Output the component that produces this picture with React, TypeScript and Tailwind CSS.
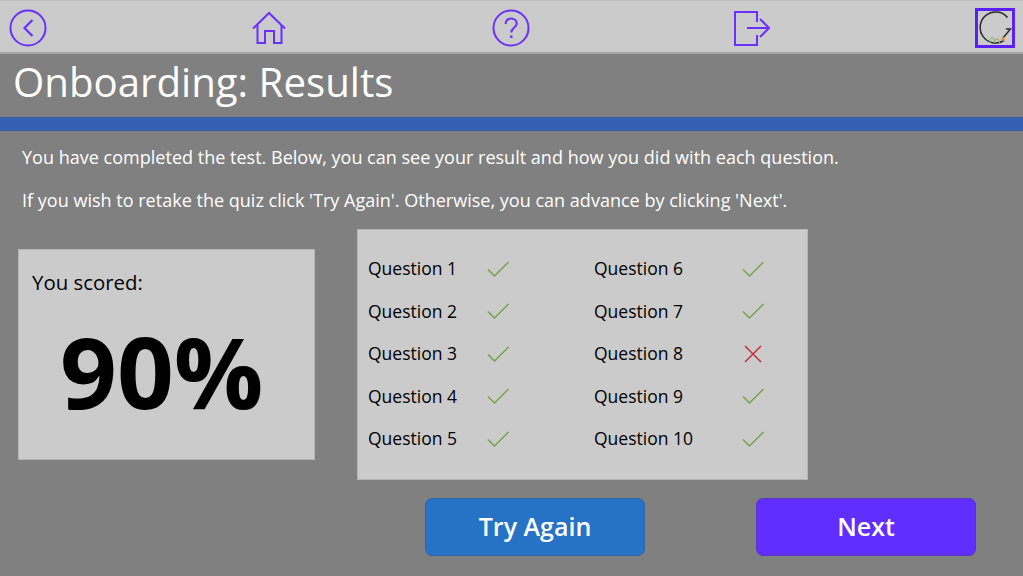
import React from "react";

const P = "#6a30ff";

function Check() {
  return (
    <svg width="24" height="18" viewBox="0 0 24 18" fill="none" stroke="#76a04e" strokeWidth="1.5">
      <path d="M2 9.5 L8.5 16 L22.5 2" />
    </svg>
  );
}
function Cross() {
  return (
    <svg width="20" height="18" viewBox="0 0 20 18" fill="none" stroke="#c22f3a" strokeWidth="1.5">
      <path d="M2 1 L18 17 M18 1 L2 17" />
    </svg>
  );
}

function Row({ label, ok, w, iw }: { label: string; ok: boolean; w: string; iw: string }) {
  return (
    <div className="flex items-center h-[42.5px]">
      <div className={`${w} text-[17.5px] text-black leading-none`}>{label}</div>
      <div className={`${iw} flex justify-center`}>{ok ? <Check /> : <Cross />}</div>
    </div>
  );
}

export default function App() {
  return (
    <div className="w-[1023px] h-[576px] overflow-hidden bg-[#808080] text-white flex flex-col font-['Open_Sans',sans-serif]">
      <header className="h-[54px] shrink-0 bg-[#cbcbcb] border-t border-t-[#bdbdbd] border-b-2 border-b-[#a6a6a6] flex items-center pt-[2px]">
        <div className="w-[55px] flex justify-center pl-[1px]">
          <svg width="38" height="38" viewBox="0 0 38 38" fill="none" stroke={P} strokeWidth="2">
            <circle cx="19" cy="19" r="17.5" />
            <path d="M23.5 11 L15.5 19 L23.5 27" strokeWidth="2.2" />
          </svg>
        </div>
        <div className="w-[186px]" />
        <div className="w-[56px] flex justify-center">
          <svg width="36" height="34" viewBox="0 0 36 34" fill="none" stroke={P} strokeWidth="2">
            <path d="M2 17.5 L18 2 L34 17.5" />
            <path d="M6.5 14 V32 H14 V20 H23 V32 H30.5 V14" />
          </svg>
        </div>
        <div className="w-[186px]" />
        <div className="w-[56px] flex justify-center">
          <svg width="38" height="38" viewBox="0 0 38 38" fill="none" stroke={P} strokeWidth="2">
            <circle cx="19" cy="19" r="17.5" />
            <path d="M13.5 15 C13.5 11.5 16 9.5 19 9.5 C22.5 9.5 24.7 11.7 24.7 14.5 C24.7 18.5 19.3 18.5 19.3 23.5" strokeWidth="2.1" />
            <path d="M19.3 26.5 V29" strokeWidth="2.4" />
          </svg>
        </div>
        <div className="w-[185px]" />
        <div className="w-[56px] flex justify-center">
          <svg width="38" height="36" viewBox="0 0 38 36" fill="none" stroke={P} strokeWidth="2">
            <path d="M24 12 V2 H2 V35 H24 V25" />
            <path d="M14 18 H36 M27 9 L36 18 L27 27" />
          </svg>
        </div>
        <div className="w-[195px]" />
        <div className="w-[40px] h-[40px] border-[3px] border-[#5a20f5] flex items-center justify-center">
          <svg width="34" height="34" viewBox="0 0 34 34" fill="none">
            <path d="M29.5 6.5 A15.5 15.5 0 1 0 26 29.5" stroke="#2b2b2b" strokeWidth="1.5" />
            <path d="M25 27 L32.5 18 H28" stroke="#2b2b2b" strokeWidth="1.5" />
            <path d="M12 32 C12 25 16 25 16.5 32 C17 27 21 26 21.5 32" stroke="#8fb878" strokeWidth="1.1" />
            <circle cx="25" cy="28" r="1.9" fill="#ee8a3a" />
          </svg>
        </div>
      </header>

      <div className="h-[63px] shrink-0 flex items-center pl-[13px] pb-[7px]">
        <h1 className="text-[40.2px] leading-none text-white font-normal">Onboarding: Results</h1>
      </div>
      <div className="h-[14px] shrink-0 bg-[#375fb1]" />

      <div className="pl-[22px] pt-[15px] text-[18.05px] leading-[23px] text-white">
        <p>You have completed the test. Below, you can see your result and how you did with each question.</p>
        <p className="mt-[20px]">If you wish to retake the quiz click 'Try Again'. Otherwise, you can advance by clicking 'Next'.</p>
      </div>

      <div className="flex items-center pl-[18px] mt-[17px]">
        <section className="w-[297px] h-[211px] bg-[#cbcbcb] border border-[#b5b5b5] text-black pl-[13px] pt-[19px]">
          <div className="text-[20.4px] leading-[27px] font-medium">You scored:</div>
          <div className="text-[99.5px] leading-[100px] font-bold mt-[25px] ml-[28px]">90%</div>
        </section>
        <section className="ml-[42px] w-[451px] h-[251px] bg-[#cbcbcb] border border-[#b5b5b5] pl-[10px] pt-[17.5px] flex">
          <div className="w-[226px]">
            <Row label="Question 1" ok w="w-[115px]" iw="w-[30px]" />
            <Row label="Question 2" ok w="w-[115px]" iw="w-[30px]" />
            <Row label="Question 3" ok w="w-[115px]" iw="w-[30px]" />
            <Row label="Question 4" ok w="w-[115px]" iw="w-[30px]" />
            <Row label="Question 5" ok w="w-[115px]" iw="w-[30px]" />
          </div>
          <div>
            <Row label="Question 6" ok w="w-[144px]" iw="w-[30px]" />
            <Row label="Question 7" ok w="w-[144px]" iw="w-[30px]" />
            <Row label="Question 8" ok={false} w="w-[144px]" iw="w-[30px]" />
            <Row label="Question 9" ok w="w-[144px]" iw="w-[30px]" />
            <Row label="Question 10" ok w="w-[144px]" iw="w-[30px]" />
          </div>
        </section>
      </div>

      <div className="flex pl-[425px] mt-[18px]">
        <button className="w-[220px] h-[58px] rounded-[7px] bg-[#2672c4] border border-[#2a66a8] text-white text-[25px] font-semibold">Try Again</button>
        <button className="ml-[111px] w-[220px] h-[58px] rounded-[7px] bg-[#602eff] border border-[#5a35c8] text-white text-[25px] font-semibold">Next</button>
      </div>
    </div>
  );
}
